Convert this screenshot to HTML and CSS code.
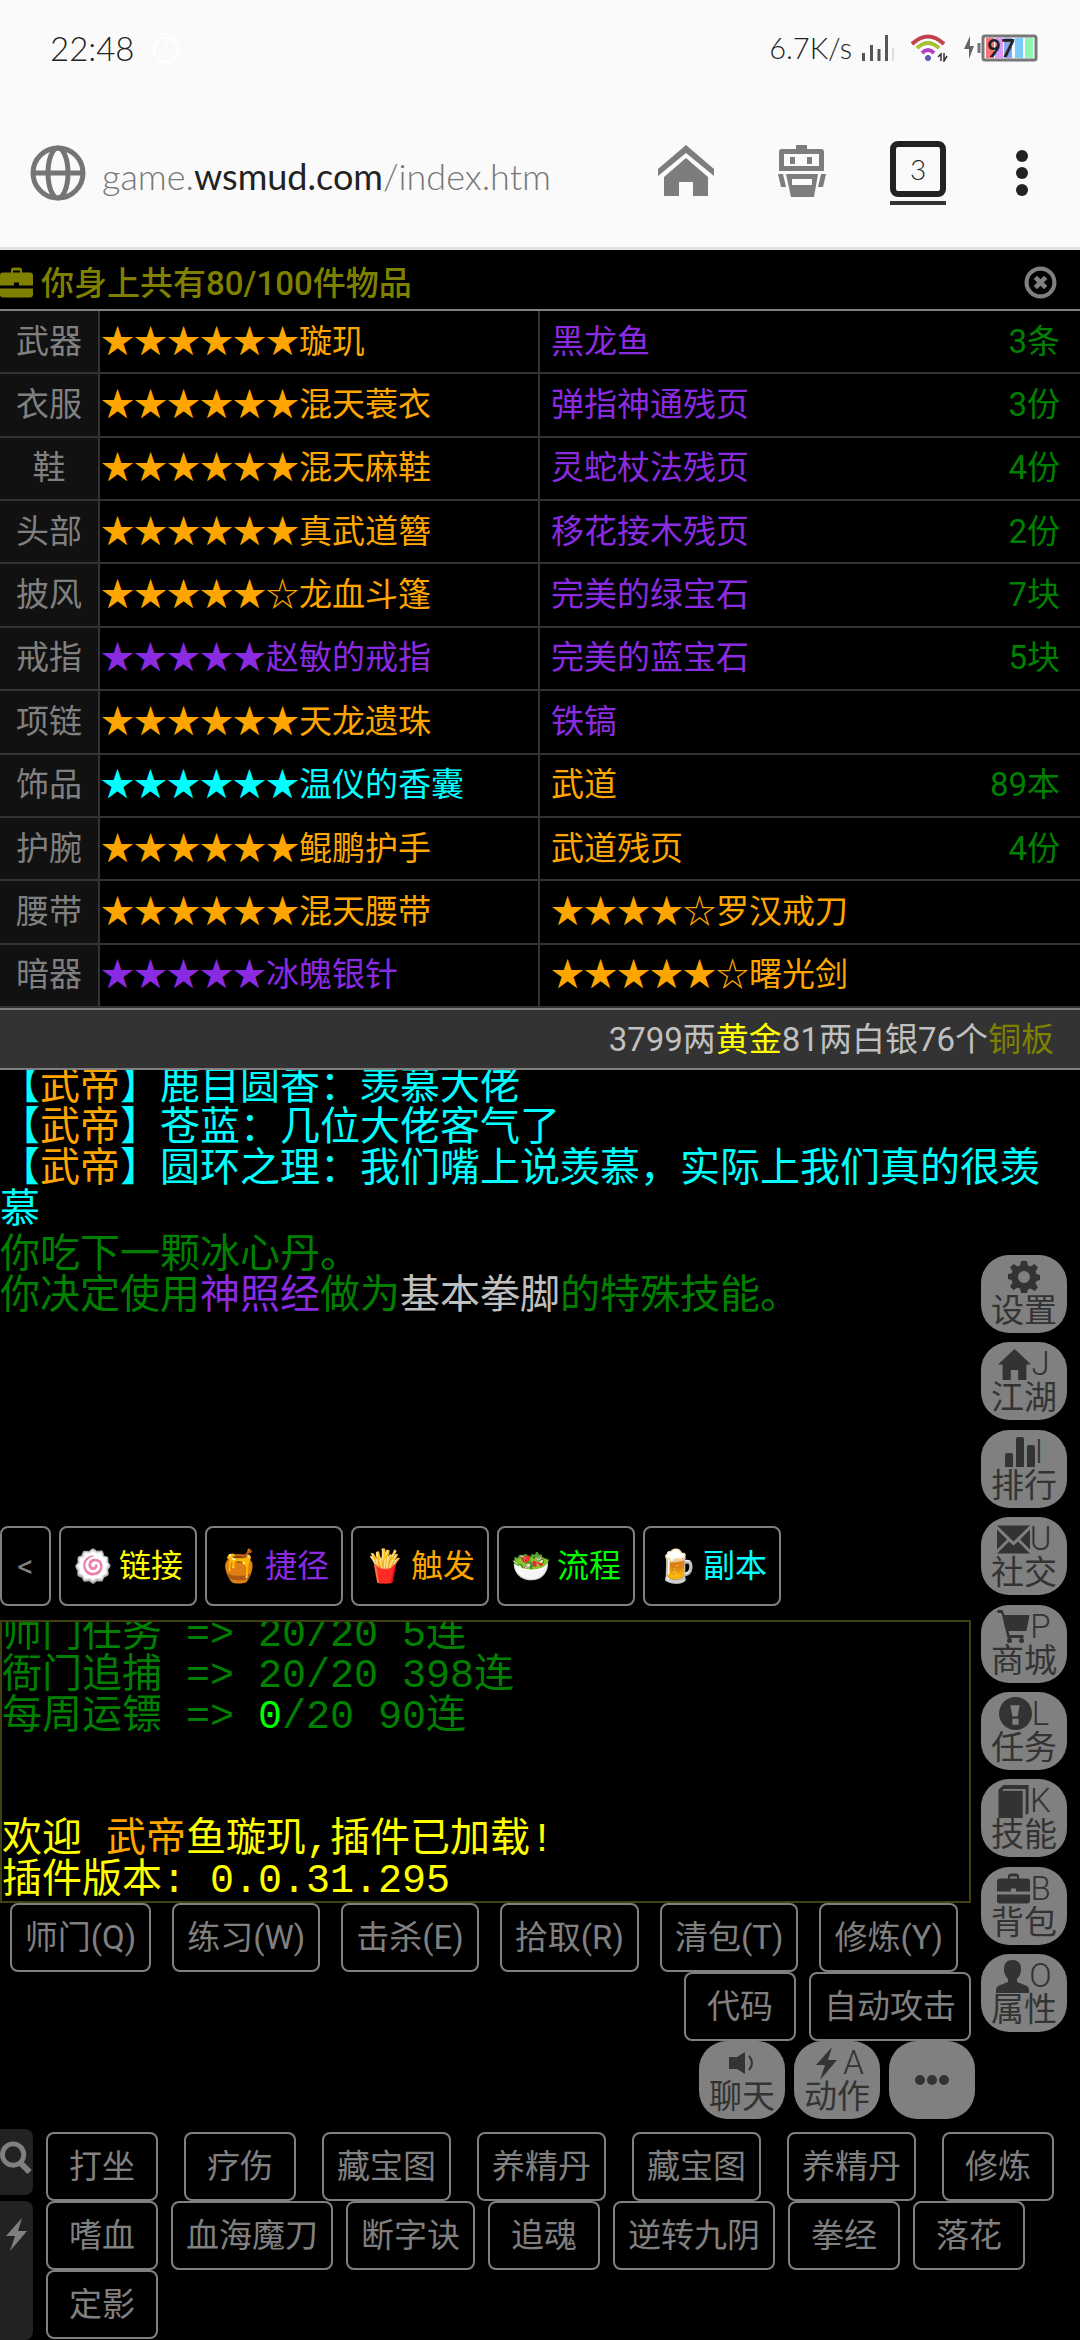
FILE: index.html
```html
<!DOCTYPE html>
<html lang="zh-CN">
<head>
<meta charset="utf-8">
<meta name="viewport" content="width=device-width, initial-scale=1">
<title>武神传说</title>
<link rel="stylesheet" href="styles.css">
</head>
<body>
<svg class="defs" aria-hidden="true">
  <symbol id="i-case" viewBox="0 0 33 30"><path d="M11 5V3q0-3 3-3h5q3 0 3 3v2h8q3 0 3 3v10H19v-3h-5v3H0V8q0-3 3-3zm2 0h7V3h-7zM0 21h33v6q0 3-3 3H3q-3 0-3-3z"/></symbol>
  <symbol id="i-gear" viewBox="0 0 32 32"><path fill-rule="evenodd" d="M13 0h6l1 4.500 2.500 1 4-2.500 3.500 3.500-2.500 4 1 2.500 3.500 1v5l-3.500 1-1 2.500 2.500 4-3.500 3.500-4-2.500-2.500 1L19 32h-6l-1-4.500-2.500-1-4 2.500L2 25.500l2.500-4-1-2.500L0 18v-5l3.500-.500 1-2.500L2 6.500 5.500 3l4 2.500 2.500-1zM16 10a6 6 0 1 0 0 12 6 6 0 0 0 0-12z"/></symbol>
  <symbol id="i-home" viewBox="0 0 36 34"><path d="M18 0 36 17h-5v17H22V23h-8v11H5V17H0z"/></symbol>
  <symbol id="i-bars" viewBox="0 0 30 30"><path d="M0 30V18q0-2 2-2h4q2 0 2 2v12zM11 30V2q0-2 2-2h4q2 0 2 2v28zM22 30V10q0-2 2-2h4q2 0 2 2v20z"/></symbol>
  <symbol id="i-mail" viewBox="0 0 33 28"><path d="M0 0h33L16.500 16zM0 4l10 10L0 24zM33 4v20L23 14zM12 16l4.500 4 4.500-4 12 12H0z"/></symbol>
  <symbol id="i-cart" viewBox="0 0 32 33"><path d="M0 0h5l2 5h25l-3 16H11l1 4h14v3H10L4 3H0z"/><circle cx="12" cy="30.500" r="2.500"/><circle cx="24" cy="30.500" r="2.500"/></symbol>
  <symbol id="i-alert" viewBox="0 0 32 32"><path fill-rule="evenodd" d="M16 0a16 16 0 1 1 0 32 16 16 0 0 1 0-32zm-5 8 2 11h5l2-11zm2 13v6h6v-6z"/></symbol>
  <symbol id="i-book" viewBox="0 0 31 34"><path fill-rule="evenodd" d="M5 0h26v29l-3 2V4H5L4 6h21v28H0V5z"/></symbol>
  <symbol id="i-user" viewBox="0 0 33 33"><path d="M16.500 0c6 0 9 4 8.500 10-.3 4-1.500 6-4 9v3l10 4q2 1 2 4v3H0v-3q0-3 2-4l10-4v-3c-2.500-3-3.700-5-4-9-.5-6 2.500-10 8.500-10z"/></symbol>
  <symbol id="i-sound" viewBox="0 0 26 22"><path d="M0 5h8l8-5v22l-8-5H0z"/><path d="M20 4q6 7 0 14" fill="none" stroke="currentColor" stroke-width="2"/></symbol>
  <symbol id="i-flash" viewBox="0 0 21 33"><path d="M16 0 0 18h9L4 33l17-20h-9z"/></symbol>
  <symbol id="i-search" viewBox="0 0 33 34"><circle cx="13" cy="14" r="11" fill="none" stroke="currentColor" stroke-width="5"/><path d="m20 22 10 10" stroke="currentColor" stroke-width="6"/></symbol>
  <symbol id="i-close" viewBox="0 0 32 32"><circle cx="16" cy="16" r="13.500" fill="none" stroke="currentColor" stroke-width="4"/><path d="m11 11 10 10M21 11 11 21" stroke="currentColor" stroke-width="4.500"/></symbol>
</svg>

<header class="browser">
  <div class="status">
    <span class="clock">22:48</span>
    <svg class="timer" viewBox="0 0 28 32" aria-hidden="true"><circle cx="14" cy="18" r="12" fill="none" stroke="#fff" stroke-width="2"/><path d="M14 11v9M11 2h6M23 6l2 2" stroke="#fff" stroke-width="2"/></svg>
    <span class="speed">6.7K/s</span>
    <svg class="signal" viewBox="0 0 32 26" aria-hidden="true"><path d="M1.500 18v8M9.500 10v16M17 14v12M24.500 0v26" stroke="#555" stroke-width="3"/><path d="M31 13v13" stroke="#ddd" stroke-width="2"/></svg>
    <svg class="wifi" viewBox="0 0 40 28" aria-hidden="true"><g fill="none" stroke-width="4"><path d="M2 10q16-15 32 0" stroke="#c0434f"/><path d="M7 14q11-10 22 0" stroke="#a9bf35"/><path d="M12 19q6-6 12 0" stroke="#b63cc4"/></g><circle cx="18" cy="24" r="3" fill="#5a5ab5"/><path d="m28 23 3-3v7M37 22l-3 5v-8" stroke="#333" stroke-width="1.500" fill="none"/></svg>
    <svg class="battery" viewBox="0 0 74 28" aria-hidden="true"><path d="M6 2v10h4L5 25V15H0z" fill="#666"/><path d="M15 9v10" stroke="#777" stroke-width="3"/><rect x="22" y="4" width="8" height="20" fill="#f8747c"/><rect x="31" y="4" width="8" height="20" fill="#dc9af2"/><rect x="40" y="4" width="8" height="20" fill="#86a4f2"/><rect x="51" y="4" width="8" height="20" fill="#79cbfb"/><rect x="61" y="4" width="8" height="20" fill="#8ff5b4"/><rect x="19" y="2" width="53" height="24" rx="2" fill="none" stroke="#777" stroke-width="3"/><text x="23" y="23" class="level">97</text></svg>
  </div>
  <nav class="address">
    <svg class="globe" viewBox="0 0 56 56" fill="none" stroke="#757575" stroke-width="5" aria-hidden="true"><circle cx="28" cy="28" r="25"/><ellipse cx="28" cy="28" rx="10" ry="25"/><path d="M3 28h50"/></svg>
    <a class="url" href="#">game.<b>wsmud.com</b>/index.htm</a>
    <button class="nav-btn" aria-label="主页"><svg viewBox="0 0 56 52" fill="#7d7d7d"><path d="M28 0 56 24v7L28 8 0 31v-7z"/><path d="m28 13 22 19v19H35V37H21v14H6V32z"/></svg></button>
    <button class="nav-btn" aria-label="助手"><svg viewBox="0 0 56 52" fill="#7d7d7d"><path fill-rule="evenodd" d="M22 4V0h11v4h14q3 0 3 3v19H5V7q0-3 3-3zM10 9v12h35V9z"/><path d="M16 12h5v7h-5zM33 12h5v7h-5z"/><path fill-rule="evenodd" d="M12 29h32l-4 23H17zm6 5v6h20v-6zM4 29h5l3 13H7zM47 29h5l-3 13h-5z"/></svg></button>
    <button class="nav-btn tabs"><span>3</span></button>
    <button class="menu" aria-label="菜单"><i></i><i></i><i></i></button>
  </nav>
</header>

<main>
  <section class="pack">
    <div class="pack-head">
      <svg class="ico"><use href="#i-case"/></svg>
      <h1>你身上共有80/100件物品</h1>
      <button class="close" aria-label="关闭"><svg class="ico"><use href="#i-close"/></svg></button>
    </div>
    <div class="pack-body">
      <table class="equip">
        <tr><th>武器</th><td class="orange">★★★★★★璇玑</td></tr>
        <tr><th>衣服</th><td class="orange">★★★★★★混天蓑衣</td></tr>
        <tr><th>鞋</th><td class="orange">★★★★★★混天麻鞋</td></tr>
        <tr><th>头部</th><td class="orange">★★★★★★真武道簪</td></tr>
        <tr><th>披风</th><td class="orange">★★★★★☆龙血斗篷</td></tr>
        <tr><th>戒指</th><td class="purple">★★★★★赵敏的戒指</td></tr>
        <tr><th>项链</th><td class="orange">★★★★★★天龙遗珠</td></tr>
        <tr><th>饰品</th><td class="cyan">★★★★★★温仪的香囊</td></tr>
        <tr><th>护腕</th><td class="orange">★★★★★★鲲鹏护手</td></tr>
        <tr><th>腰带</th><td class="orange">★★★★★★混天腰带</td></tr>
        <tr><th>暗器</th><td class="purple">★★★★★冰魄银针</td></tr>
      </table>
      <table class="items">
        <tr><td class="purple">黑龙鱼</td><td>3条</td></tr>
        <tr><td class="purple">弹指神通残页</td><td>3份</td></tr>
        <tr><td class="purple">灵蛇杖法残页</td><td>4份</td></tr>
        <tr><td class="purple">移花接木残页</td><td>2份</td></tr>
        <tr><td class="purple">完美的绿宝石</td><td>7块</td></tr>
        <tr><td class="purple">完美的蓝宝石</td><td>5块</td></tr>
        <tr><td class="purple">铁镐</td><td></td></tr>
        <tr><td class="orange">武道</td><td>89本</td></tr>
        <tr><td class="orange">武道残页</td><td>4份</td></tr>
        <tr><td class="orange">★★★★☆罗汉戒刀</td><td></td></tr>
        <tr><td class="orange">★★★★★☆曙光剑</td><td></td></tr>
      </table>
    </div>
    <p class="money">3799两<span class="yellow">黄金</span>81两白银76个<span class="olive">铜板</span></p>
  </section>

  <section class="stage">
    <div class="log">
      <div class="chat">
        <p>【<span class="orange">武帝</span>】鹿目圆香：羡慕大佬</p>
        <p>【<span class="orange">武帝</span>】苍蓝：几位大佬客气了</p>
        <p>【<span class="orange">武帝</span>】圆环之理：我们嘴上说羡慕，实际上我们真的很羡慕</p>
      </div>
      <div class="events">
        <p>你吃下一颗冰心丹。</p>
        <p>你决定使用<span class="purple">神照经</span>做为<span class="silver">基本拳脚</span>的特殊技能。</p>
      </div>
    </div>
    <div class="work">
      <div class="tools">
        <button class="fold">&lt;</button>
        <button class="yellow"><span class="emoji">🍥</span>链接</button>
        <button class="purple"><span class="emoji">🍯</span>捷径</button>
        <button class="orange"><span class="emoji">🍟</span>触发</button>
        <button class="lime"><span class="emoji">🥗</span>流程</button>
        <button class="cyan"><span class="emoji">🍺</span>副本</button>
      </div>
      <div class="console">
        <pre>师门任务 =&gt; 20/20 5连
衙门追捕 =&gt; 20/20 398连
每周运镖 =&gt; <span class="lime">0</span>/20 90连


<span class="yellow">欢迎 <span class="orange">武帝</span>鱼璇玑,插件已加载!
插件版本: 0.0.31.295</span></pre>
      </div>
      <div class="keys spread">
        <button>师门(Q)</button><button>练习(W)</button><button>击杀(E)</button><button>拾取(R)</button><button>清包(T)</button><button>修炼(Y)</button>
      </div>
      <div class="keys">
        <button>代码</button><button>自动攻击</button>
      </div>
    </div>
    <nav class="rail">
      <button class="bubble"><span><svg class="ico gear"><use href="#i-gear"/></svg></span>设置</button>
      <button class="bubble"><span><svg class="ico"><use href="#i-home"/></svg>J</span>江湖</button>
      <button class="bubble"><span><svg class="ico bars"><use href="#i-bars"/></svg>I</span>排行</button>
      <button class="bubble"><span><svg class="ico"><use href="#i-mail"/></svg>U</span>社交</button>
      <button class="bubble"><span><svg class="ico"><use href="#i-cart"/></svg>P</span>商城</button>
      <button class="bubble"><span><svg class="ico"><use href="#i-alert"/></svg>L</span>任务</button>
      <button class="bubble"><span><svg class="ico"><use href="#i-book"/></svg>K</span>技能</button>
      <button class="bubble"><span><svg class="ico"><use href="#i-case"/></svg>B</span>背包</button>
      <button class="bubble"><span><svg class="ico"><use href="#i-user"/></svg>O</span>属性</button>
    </nav>
  </section>

  <nav class="talk">
    <button class="bubble"><span><svg class="ico sound"><use href="#i-sound"/></svg></span>聊天</button>
    <button class="bubble"><span><svg class="ico"><use href="#i-flash"/></svg>A</span>动作</button>
    <button class="bubble more" aria-label="更多"><i></i><i></i><i></i></button>
  </nav>

  <section class="dock">
    <div class="side">
      <button aria-label="搜索"><svg class="ico"><use href="#i-search"/></svg></button>
      <button class="tall" aria-label="技能"><svg class="ico"><use href="#i-flash"/></svg></button>
    </div>
    <div class="skills">
      <div class="line wide"><button>打坐</button><button>疗伤</button><button>藏宝图</button><button>养精丹</button><button>藏宝图</button><button>养精丹</button><button>修炼</button><button aria-label="下一项"></button></div>
      <div class="line"><button>嗜血</button><button>血海魔刀</button><button>断字诀</button><button>追魂</button><button>逆转九阴</button><button>拳经</button><button>落花</button><button>定影</button></div>
    </div>
  </section>
</main>
</body>
</html>
```
FILE: styles.css
```css
* { box-sizing: border-box; }
body {
  margin: 0;
  min-height: 100vh;
  display: flex;
  flex-direction: column;
  background: #000;
  color: #808080;
  font: 33px/40px Roboto, "Noto Sans CJK SC", sans-serif;
  overflow-x: hidden;
}
h1, p, pre { margin: 0; }
button {
  margin: 0;
  padding: 0;
  border: 0;
  background: none;
  color: inherit;
  font: inherit;
}
.defs { position: absolute; width: 0; height: 0; }
.ico { width: 33px; height: 33px; fill: currentColor; flex: none; }
.orange { color: #ffa500; }
.purple { color: #8a2be2; }
.cyan { color: #0ff; }
.yellow { color: #ff0; }
.lime { color: #0f0; }
.olive { color: #808000; }
.silver { color: silver; }

/* browser chrome */
.browser {
  height: 250px;
  background: #fafafa;
  border-bottom: 3px solid #e2e2e2;
  font-family: Lato, sans-serif;
  font-weight: 300;
  color: #222;
}
.status {
  display: flex;
  align-items: center;
  padding: 28px 42px 0 50px;
}
.clock { font-size: 33px; }
.timer { width: 28px; height: 32px; margin: 0 auto 0 18px; }
.speed { font-size: 29px; margin-right: 10px; }
.signal { width: 32px; height: 26px; margin-right: 16px; }
.wifi { width: 40px; height: 28px; margin-right: 14px; }
.battery { width: 74px; height: 28px; }
.level { font: 700 24px Lato, sans-serif; fill: #222; }
.address {
  display: flex;
  align-items: center;
  padding: 73px 42px 0 30px;
}
.globe { width: 56px; height: 56px; margin-right: 16px; }
.url {
  flex: 1;
  padding-top: 6px;
  color: #777;
  font-size: 36px;
  text-decoration: none;
}
.url b { font-weight: 400; color: #222; }
.nav-btn { width: 56px; height: 56px; margin-right: 60px; }
.nav-btn svg { width: 56px; height: 52px; }
.tabs {
  height: 64px;
  border-bottom: 4px solid #333;
}
.tabs span {
  display: block;
  height: 56px;
  margin-bottom: 4px;
  border: 6px solid #222;
  border-radius: 8px;
  font-size: 28px;
  line-height: 44px;
}
.menu {
  display: flex;
  flex-direction: column;
  align-items: center;
  gap: 5px;
  width: 32px;
}
.menu i, .more i {
  width: 12px;
  height: 12px;
  border-radius: 50%;
  background: #222;
}

/* inventory */
main { flex: 1; display: flex; flex-direction: column; }
.pack-head {
  display: flex;
  align-items: center;
  height: 61px;
  padding: 5px 23px 0 0;
  border-bottom: 2px solid #808080;
  color: #808000;
}
.pack-head h1 { flex: 1; margin-left: 8px; padding-top: 4px; font-size: 33px; font-weight: 500; }
.close { display: flex; color: #808080; }
.pack-body { display: flex; }
table { width: 50%; height: 697px; border-spacing: 0; }
th, td { padding: 0; border-bottom: 2px solid #333; font-weight: 400; }
.equip th { width: 100px; background: #111; border-right: 2px solid #333; }
.equip td { padding-left: 1px; border-right: 2px solid #333; }
.items td { padding-left: 11px; }
.items td + td { padding: 0 20px 0 0; color: #008000; text-align: right; }
.money {
  height: 62px;
  padding-right: 26px;
  border: solid #808080;
  border-width: 2px 0;
  background: #333;
  color: silver;
  line-height: 60px;
  text-align: right;
}

/* log, console and the key rows, with the rail on the right */
.stage {
  flex: 1;
  display: grid;
  grid-template-columns: 1fr 109px;
  grid-template-rows: 1fr auto;
}
.log {
  grid-area: 1 / 1 / 2 / 3;
  overflow: hidden;
  padding-right: 8px;
  font-size: 40px;
  line-height: 41px;
}
.chat { margin: -5px 0 4px; color: #0ff; }
.events { color: #008000; }
.work { grid-area: 2 / 1; min-width: 0; }
.rail {
  grid-area: 1 / 2 / 3 / 3;
  align-self: end;
  display: flex;
  flex-direction: column;
  justify-content: space-between;
  align-items: flex-start;
  height: 777px;
  padding-left: 10px;
  margin-bottom: 9px;
}
.tools { display: flex; gap: 8px; margin-bottom: 14px; }
.tools button {
  display: flex;
  align-items: center;
  height: 80px;
  padding: 0 12px;
  border: 2px solid #808080;
  border-radius: 8px;
  font-size: 32px;
}
.tools .fold { width: 51px; justify-content: center; }
.emoji { width: 38px; margin-right: 8px; font-size: 32px; font-family: "Noto Color Emoji", sans-serif; }
.console {
  height: 283px;
  border: 2px solid #404010;
  overflow: hidden;
  color: #008000;
}
.console pre {
  margin-top: -7px;
  font: 40px/41px "Liberation Mono", "Noto Sans CJK SC", monospace;
}
.keys { display: flex; justify-content: flex-end; gap: 13px; }
.spread { gap: 21px; padding-right: 13px; }
.keys button, .line button {
  flex: none;
  min-width: 112px;
  height: 69px;
  padding: 0 13px;
  border: 2px solid #808080;
  border-radius: 8px;
}
.bubble {
  display: flex;
  flex-direction: column;
  align-items: center;
  justify-content: center;
  width: 86px;
  height: 78px;
  border-radius: 28px;
  background: #808080;
  color: #333;
  line-height: 34px;
}
.bubble span { display: flex; align-items: center; height: 34px; font-weight: 300; }
.bubble .gear { width: 32px; height: 32px; }
.bubble .bars { width: 30px; height: 30px; }
.bubble .sound { width: 26px; height: 22px; }

.talk {
  display: flex;
  justify-content: flex-end;
  gap: 9px;
  margin-bottom: 10px;
  padding-right: 105px;
}
.talk .more { flex-direction: row; }
.more i { width: 10px; height: 10px; margin: 0 1px; background: #333; }

/* bottom dock */
.dock { display: flex; gap: 13px; }
.side { display: flex; flex-direction: column; gap: 6px; width: 33px; flex: none; }
.side button {
  height: 66px;
  border-radius: 0 8px 8px 0;
  background: #222;
}
.side .tall { height: auto; flex: 1; padding-top: 17px; display: flex; align-items: flex-start; }
.skills { flex: 1; min-width: 0; padding: 3px 0 1px; }
.line { display: flex; flex-wrap: wrap; gap: 0 13px; }
.wide { flex-wrap: nowrap; gap: 26px; overflow: hidden; }
```
